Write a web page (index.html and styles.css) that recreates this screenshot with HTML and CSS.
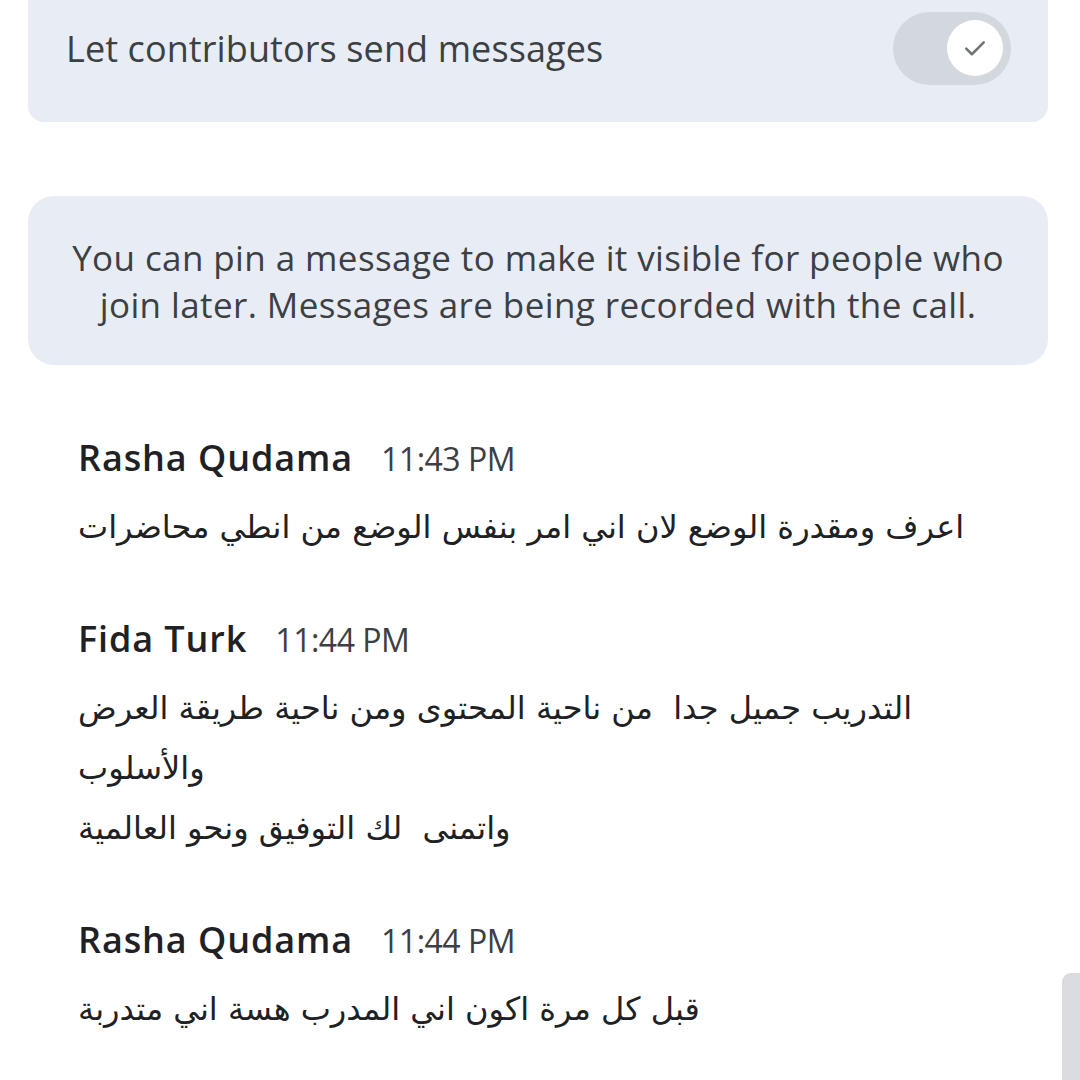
FILE: index.html
```html
<!DOCTYPE html>
<html lang="en">
<head>
<meta charset="utf-8">
<link rel="stylesheet" href="styles.css">
</head>
<body>
<div class="page">
  <div class="setting-card">
    <span class="setting-label">Let contributors send messages</span>
    <div class="toggle">
      <div class="thumb">
        <svg width="30" height="30" viewBox="0 0 24 24"><path d="M5 12.5l4.5 4.5L19 7.5" fill="none" stroke="#6f7378" stroke-width="2" stroke-linecap="round" stroke-linejoin="round"/></svg>
      </div>
    </div>
  </div>

  <div class="info-card">
    You can pin a message to make it visible for people who join later. Messages are being recorded with the call.
  </div>

  <div class="messages">
    <div class="msg">
      <div class="msg-head"><span class="name">Rasha Qudama</span><span class="time">11:43 PM</span></div>
      <div class="msg-body"><p>اعرف ومقدرة الوضع لان اني امر بنفس الوضع من انطي محاضرات</p></div>
    </div>
    <div class="msg">
      <div class="msg-head"><span class="name">Fida Turk</span><span class="time">11:44 PM</span></div>
      <div class="msg-body"><p>التدريب جميل جدا  من ناحية المحتوى ومن ناحية طريقة العرض</p><p>والأسلوب</p><p>واتمنى  لك التوفيق ونحو العالمية</p></div>
    </div>
    <div class="msg">
      <div class="msg-head"><span class="name">Rasha Qudama</span><span class="time">11:44 PM</span></div>
      <div class="msg-body"><p>قبل كل مرة اكون اني المدرب هسة اني متدربة</p></div>
    </div>
  </div>
  <div class="scrollbar"></div>
</div>
</body>
</html>
```
FILE: styles.css
```css
* { box-sizing: border-box; }
html, body { margin: 0; padding: 0; background: #ffffff; }
body { width: 1080px; height: 1080px; overflow: hidden; font-family: "Open Sans", Roboto, "DejaVu Sans", sans-serif; }
.page { position: relative; display: flow-root; width: 1080px; height: 1080px; padding: 0 32px 0 28px; }
.setting-card {
  margin-top: -26px;
  height: 148px;
  width: 1020px;
  background: #e8edf5;
  border-radius: 0 0 16px 16px;
  display: flex; align-items: center; justify-content: space-between;
  padding: 0 37px 0 38px;
  margin-bottom: 74px;
}
.setting-label { font-size: 36px; color: #3c4043; letter-spacing: 0.1px; }
.toggle {
  width: 118px; height: 73px; border-radius: 37px; background: #d3d7de;
  display: flex; align-items: center; justify-content: flex-end; padding-right: 8px;
}
.thumb { width: 56px; height: 56px; border-radius: 50%; background: #fff; display: flex; align-items: center; justify-content: center; }
.info-card {
  width: 1020px; height: 169px;
  background: #e8edf5; border-radius: 26px;
  display: flex; align-items: center; justify-content: center; text-align: center;
  padding: 0 20px;
  font-size: 35px; line-height: 47px; color: #3c4043; letter-spacing: 0.4px;
  margin-bottom: 69px;
}
.messages { padding-left: 50px; }
.msg { margin-bottom: 58px; }
.msg-head { display: flex; align-items: baseline; height: 48px; line-height: 48px; margin-bottom: 15px; }
.name { font-size: 36px; font-weight: 600; color: #202124; margin-right: 28px; letter-spacing: 0.9px; }
.time { font-size: 32px; color: #3c4043; letter-spacing: -0.5px; }
.msg-body p {
  margin: 0; direction: rtl; text-align: left; unicode-bidi: plaintext; white-space: pre-wrap;
  font-family: "DejaVu Sans", sans-serif; font-size: 32px; line-height: 60px; color: #202124;
}
.scrollbar { position: absolute; right: 0; top: 973px; width: 18px; height: 120px; background: #dadce0; border-radius: 9px 0 0 0; }
```
